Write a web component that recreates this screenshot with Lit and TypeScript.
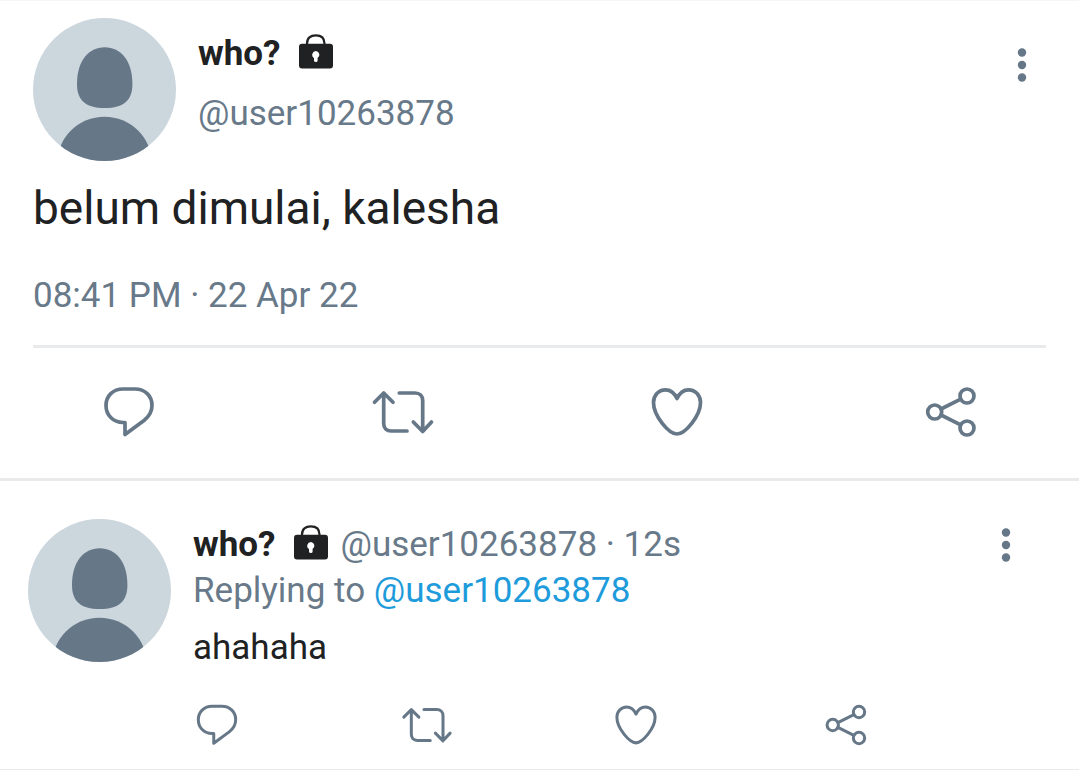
import { LitElement, html, css, svg } from "lit";
import { customElement, property } from "lit/decorators.js";

const glyphs = {
  reply: svg`<path d="M28 54.5V42.5H26C16 42.5 9 35 9 25.5C9 16 16 9 26 9H38C48 9 55 16 55 25.5C55 32 52 36.500 47 40.500Z"/>`,
  repost: svg`<path d="M3.500 22.300L12.700 13L22 22.300M12.700 13.500V43.500C12.700 48 15.500 51 20 51H36M28.300 13H44C48.800 13 51.700 16 51.700 20.500V51M42.300 42L51.700 51.500L60.500 42"/>`,
  like: svg`<path d="M32 18.500C29.500 13 25.500 9.800 20.500 9.800C13.500 9.800 8.500 15.500 8.500 22.500C8.500 36 24 54 32 54C40 54 55.500 36 55.500 22.500C55.500 15.500 50.500 9.800 43.500 9.800C38.500 9.800 34.500 13 32 18.500Z"/>`,
  share: svg`<circle cx="15.700" cy="32" r="7"/><circle cx="48" cy="16" r="7"/><circle cx="48" cy="48" r="7"/><path d="M22 29L41.700 19.200M22 35L41.700 44.800"/>`,
};

@customElement("user-avatar")
class UserAvatar extends LitElement {
  static styles = css`
    :host { display: block; flex: none; }
    .picture { display: block; width: 143px; height: 143px; border-radius: 50%; }
  `;
  render() {
    return html`<svg class="picture" viewBox="0 0 143 143" role="img" aria-label="Profile picture">
      <rect width="143" height="143" fill="#ccd6dd"/>
      <path fill="#667788" d="M71.700 29.300C88 29.300 99.400 43 99.400 66C99.400 82 91 90 71.700 90C52.500 90 44 82 44 66C44 43 55.500 29.300 71.700 29.300Z"/>
      <circle cx="71.500" cy="146.200" r="47.500" fill="#667788"/>
    </svg>`;
  }
}

@customElement("lock-badge")
class LockBadge extends LitElement {
  static styles = css`
    :host { display: block; flex: none; }
    .lock { display: block; width: 36px; height: 36px; }
  `;
  render() {
    return html`<svg class="lock" viewBox="0 0 36 36" role="img" aria-label="Protected account">
      <path d="M9 11V9.500C9 4 12.500 1.300 17.800 1.300C23 1.300 26.500 4 26.500 9.500V11" fill="none" stroke="#202122" stroke-width="2.200"/>
      <path fill="#202122" fill-rule="evenodd" d="M4 9.800H32Q35 9.800 35 12.800V31.500Q35 34.500 32 34.500H4Q1 34.500 1 31.500V12.800Q1 9.800 4 9.800ZM18 17A3.800 3.800 0 0 0 16 24V26.500Q16 28 18 28Q19.600 28 19.600 26.500V24A3.800 3.800 0 0 0 18 17Z"/>
    </svg>`;
  }
}

@customElement("more-button")
class MoreButton extends LitElement {
  static styles = css`
    :host { display: block; flex: none; }
    .more { display: block; padding: 0; border: 0; background: none; cursor: pointer; }
    .dots { display: block; width: 48px; height: 48px; fill: #667788; }
  `;
  render() {
    return html`<button class="more" type="button" aria-label="More options">
      <svg class="dots" viewBox="0 0 48 48">
        <circle cx="24" cy="11.500" r="4.200"/><circle cx="24" cy="24" r="4.200"/><circle cx="24" cy="36.500" r="4.200"/>
      </svg>
    </button>`;
  }
}

@customElement("tweet-actions")
class TweetActions extends LitElement {
  @property({ type: Boolean, reflect: true }) compact = false;

  static styles = css`
    :host { display: flex; justify-content: space-between; --icon: 64px; }
    :host([compact]) { --icon: 52px; }
    .action { display: block; padding: 0; border: 0; background: none; cursor: pointer; }
    .glyph {
      display: block; width: var(--icon); height: var(--icon); fill: none;
      stroke: #667788; stroke-width: 3.700; stroke-linecap: round; stroke-linejoin: round;
    }
  `;
  render() {
    const items = [
      ["Reply", glyphs.reply],
      ["Retweet", glyphs.repost],
      ["Like", glyphs.like],
      ["Share", glyphs.share],
    ];
    return items.map(
      ([label, glyph]) => html`<button class="action" type="button" aria-label=${label}>
        <svg class="glyph" viewBox="0 0 64 64">${glyph}</svg>
      </button>`
    );
  }
}

@customElement("app-root")
class AppRoot extends LitElement {
  static styles = css`
    :host {
      display: block; background: #fff; color: #202122;
      font-family: Roboto, sans-serif; font-size: 35px; line-height: 46px;
      border-top: 1px solid #f6f6f6;
    }
    p { margin: 0; }
    a { text-decoration: none; }
    .tweet { padding: 17px 33px 0; border-bottom: 3px solid #e9eaeb; }
    .header { display: flex; gap: 22px; }
    .author { flex: 1; min-width: 0; padding-top: 13px; display: grid; gap: 14px; align-content: start; }
    .header more-button { padding-top: 23px; }
    .name { display: flex; align-items: center; }
    .name lock-badge { margin: 0 0 4px 18px; }
    .bold { font-weight: 700; }
    .muted { color: #687989; }
    .mention { color: #1d9bdb; }
    .message { font-size: 46px; line-height: 56px; margin-top: 19px; }
    .date { display: block; margin-top: 37px; }
    .rule { border: 0; border-top: 3px solid #e9eaeb; margin: 26px 0 0; }
    .main-actions { padding: 32px 63px 34px 64px; }
    .reply { display: flex; gap: 22px; padding: 38px 49px 18px 28px; border-bottom: 1px solid #e9eaeb; }
    .body { flex: 1; min-width: 0; padding-top: 3px; }
    .meta { display: flex; align-items: center; height: 46px; }
    .meta .name { flex: 1; min-width: 0; }
    .byline { margin-left: 11px; }
    .text { margin-top: 11px; }
    .reply-actions { padding-right: 158px; margin: 28px 0 0 -2px; }
  `;
  render() {
    return html`
      <article class="tweet">
        <header class="header">
          <user-avatar></user-avatar>
          <div class="author">
            <div class="name"><span class="bold">who?</span><lock-badge></lock-badge></div>
            <a class="muted" href="#profile">@user10263878</a>
          </div>
          <more-button></more-button>
        </header>
        <p class="message">belum dimulai, kalesha</p>
        <time class="date muted" datetime="2022-04-22T20:41">08:41 PM · 22 Apr 22</time>
        <hr class="rule" />
        <tweet-actions class="main-actions"></tweet-actions>
      </article>
      <article class="reply">
        <user-avatar></user-avatar>
        <div class="body">
          <header class="meta">
            <div class="name">
              <span class="bold">who?</span><lock-badge></lock-badge>
              <span class="byline muted">@user10263878 · 12s</span>
            </div>
            <more-button></more-button>
          </header>
          <p class="muted">Replying to <a class="mention" href="#profile">@user10263878</a></p>
          <p class="text">ahahaha</p>
          <tweet-actions class="reply-actions" compact></tweet-actions>
        </div>
      </article>
    `;
  }
}
